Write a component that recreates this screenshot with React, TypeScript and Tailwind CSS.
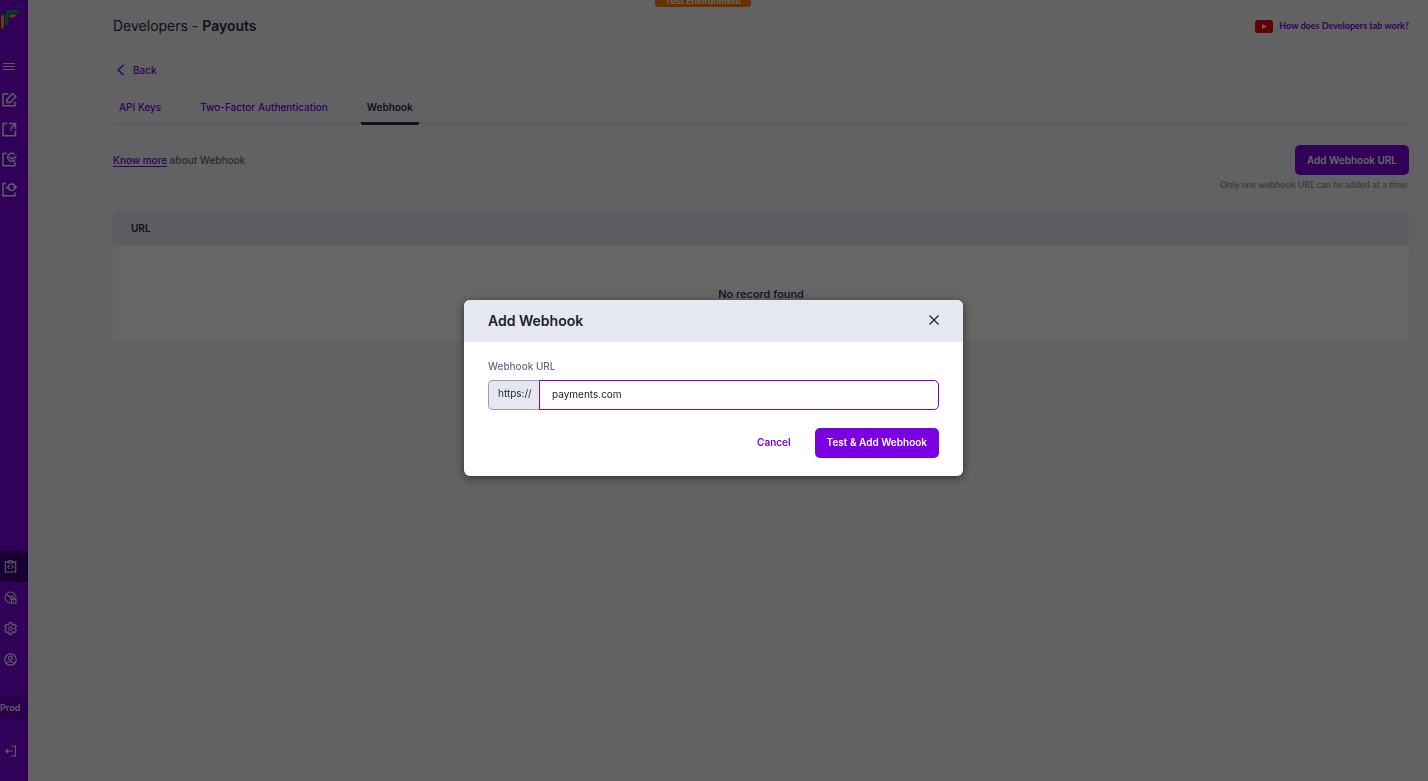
import { useState } from 'react'
import { clsx } from 'clsx'

interface NavItem {
  label: string
  icon: () => React.ReactElement
  active?: boolean
}

function Logo() {
  return (
    <svg width="21" height="20" viewBox="0 0 21 20" aria-hidden="true">
      <path d="M1 19V7.500Q1 4.500 4 4.500V15.500Q4 19 1 19Z" fill="#f59e0b" />
      <path d="M5 15V4Q5 0 9 0H20Q19 3.500 16 3.500H10Q8.500 3.500 8.500 5V11.500Q8.500 15 5 15Z" fill="#0a9a5b" />
      <path d="M9.500 4.500H16.500Q15.500 7.500 13 7.500H9.500Z" fill="#f59e0b" />
    </svg>
  )
}

function MenuIcon() {
  return (
    <svg width="12" height="8" viewBox="0 0 12 8" stroke="currentColor" aria-hidden="true">
      <path d="M0 .5H12M0 3.500H12M0 6.500H12" />
    </svg>
  )
}

function EditIcon() {
  return (
    <svg width="15" height="15" viewBox="0 0 15 15" fill="none" stroke="currentColor" strokeWidth="1.500" aria-hidden="true">
      <path d="M6.500 2H1V13.700H13V9.500" />
      <path d="M5 7.500L10.500 1.500L13.800 4.500L8.200 10.500H5Z" />
    </svg>
  )
}

function ExportIcon() {
  return (
    <svg width="15" height="15" viewBox="0 0 15 15" fill="none" stroke="currentColor" strokeWidth="1.500" aria-hidden="true">
      <path d="M5 1.500H1V13.700H13.500V8.500" />
      <path d="M7 1.500H13.500V7M13.500 1.500L10 5L8.500 8.500" />
    </svg>
  )
}

function CheckIcon() {
  return (
    <svg width="15" height="15" viewBox="0 0 15 15" fill="none" stroke="currentColor" strokeWidth="1.500" aria-hidden="true">
      <path d="M5 1.500H1V13.700H13V10" />
      <path d="M12.500 2.500A4 4 0 1 0 13 7.500M7.500 5L9.500 6.800L14.500 4.500" />
    </svg>
  )
}

function SyncIcon() {
  return (
    <svg width="15" height="15" viewBox="0 0 15 15" fill="none" stroke="currentColor" strokeWidth="1.500" aria-hidden="true">
      <path d="M4 1.500H1V13.700H13V10.500" />
      <path d="M6.200 4A3.800 3.800 0 0 1 13.300 5M13 6.500A3.800 3.800 0 0 1 6 6M4.200 6.500L6 4.800L7.800 6.500M11.500 4.500L13.200 6.200L14.800 4.500" />
    </svg>
  )
}

function CodeIcon() {
  return (
    <svg width="13" height="13" viewBox="0 0 12 12" fill="none" stroke="currentColor" aria-hidden="true">
      <path d="M4 1.700H1.200V11H10.800V1.700H8M4 2.700V1.300L6 .4L8 1.300V2.700Z" />
      <path d="M5 4.800L3.400 6.500L5 8.200M7 4.800L8.600 6.500L7 8.200" />
    </svg>
  )
}

function ActivityIcon() {
  return (
    <svg width="13" height="13" viewBox="0 0 13 13" fill="none" stroke="currentColor" strokeWidth="1.100" aria-hidden="true">
      <path d="M6.500 12A5.500 5.500 0 1 1 12 6.500" />
      <path d="M3 3.500L6.500 6.500L9.500 4M6.500 6.500V8.500M7.500 8.500H12V12.300H7.500ZM8.500 8.500V7.500A1.300 1.300 0 0 1 11 7.500V8.500M9.700 9.800V11" />
    </svg>
  )
}

function SettingsIcon() {
  return (
    <svg width="13" height="13" viewBox="0 0 12 12" fill="none" stroke="currentColor" strokeWidth="1.100" aria-hidden="true">
      <path d="M4.900 .6H7.100L7.500 2.300L8.400 2.800L10.200 2.300L11.300 4.200L10 5.500V6.500L11.300 7.800L10.200 9.700L8.400 9.200L7.500 9.700L7.100 11.400H4.900L4.500 9.700L3.600 9.200L1.800 9.700L.7 7.800L2 6.500V5.500L.7 4.200L1.800 2.300L3.600 2.800L4.500 2.300Z" />
      <circle cx="6" cy="6" r="1.600" />
    </svg>
  )
}

function ProfileIcon() {
  return (
    <svg width="13" height="13" viewBox="0 0 13 13" fill="none" stroke="currentColor" strokeWidth="1.200" aria-hidden="true">
      <circle cx="6.500" cy="6.500" r="5.700" />
      <circle cx="6.500" cy="5" r="1.900" />
      <path d="M2.500 10Q3.500 8.500 6.500 8.500T10.500 10" />
    </svg>
  )
}

function LogoutIcon() {
  return (
    <svg width="12" height="12" viewBox="0 0 12 12" fill="none" stroke="currentColor" strokeWidth="1.200" aria-hidden="true">
      <path d="M6 1H10.500V11H6M8 6H1M3 4L1 6L3 8" />
    </svg>
  )
}

const mainItems: NavItem[] = [
  { label: 'Create', icon: EditIcon },
  { label: 'Transfers', icon: ExportIcon },
  { label: 'Verification', icon: CheckIcon },
  { label: 'Recon', icon: SyncIcon }
]

const footerItems: NavItem[] = [
  { label: 'Developers', icon: CodeIcon, active: true },
  { label: 'Activity', icon: ActivityIcon },
  { label: 'Settings', icon: SettingsIcon },
  { label: 'Profile', icon: ProfileIcon }
]

const tabs = ['API Keys', 'Two-Factor Authentication', 'Webhook']

function Sidebar() {
  return (
    <aside className="w-7 shrink-0 flex flex-col bg-[#7a00df] text-[#f0e8f8]">
      <a href="#home" aria-label="Home" className="block h-[52px] pt-2.5">
        <Logo />
      </a>
      <button type="button" aria-label="Toggle menu" className="flex items-center h-8 pl-[3px] pb-0.5">
        <MenuIcon />
      </button>
      <nav className="flex flex-col">
        {mainItems.map(item => (
          <a
            href="#nav"
            key={item.label}
            aria-label={item.label}
            className="flex items-center h-[30px] pl-0.5"
          >
            <item.icon />
          </a>
        ))}
      </nav>
      <nav className="flex flex-col mt-auto">
        {footerItems.map(item => (
          <a
            href="#nav"
            key={item.label}
            aria-label={item.label}
            className={clsx(
              'flex items-center h-[31px] pl-1',
              item.active && 'bg-[#40007d]'
            )}
          >
            <item.icon />
          </a>
        ))}
      </nav>
      <button
        type="button"
        className="mt-5 h-[26px] rounded-r bg-[#6700bf] text-left text-[9px] font-semibold"
      >
        Prod
      </button>
      <button type="button" aria-label="Log out" className="flex items-center h-[60px] pl-[5px]">
        <LogoutIcon />
      </button>
    </aside>
  )
}

function WebhookModal({ onClose }: { onClose: () => void }) {
  const [url, setUrl] = useState('payments.com')

  return (
    <div className="fixed inset-0 flex items-center justify-center pb-1.5 pr-px bg-black/60">
      <div
        role="dialog"
        aria-modal="true"
        aria-labelledby="modal-title"
        className="w-full max-w-[499px] rounded-md bg-white overflow-hidden shadow-[0_2px_10px_rgba(0,0,0,0.5)]"
      >
        <div className="flex items-center justify-between h-[42px] px-6 bg-[#e6e8f1]">
          <h2 id="modal-title" className="text-sm font-semibold text-[#222226]">
            Add Webhook
          </h2>
          <button type="button" aria-label="Close" onClick={onClose} className="pb-0.5 text-[#22223a]">
            <svg width="10" height="10" viewBox="0 0 10 10" stroke="currentColor" strokeWidth="1.300" aria-hidden="true">
              <path d="M.5 .5L9.500 9.500M9.500 .5L.5 9.500" />
            </svg>
          </button>
        </div>
        <form className="px-6 pt-4 pb-[18px]" onSubmit={e => e.preventDefault()}>
          <label htmlFor="webhook-url" className="block mb-1.5 text-[10px] leading-4 font-medium text-[#6b6a80]">
            Webhook URL
          </label>
          <div className="flex h-[30px] text-[10px]">
            <span className="flex items-center w-[51px] pl-[9px] pb-0.5 rounded-l-[5px] border border-r-0 border-[#9c9bb0] bg-[#e6e8f1] text-[#2a2945]">
              https://
            </span>
            <input
              id="webhook-url"
              type="text"
              value={url}
              onChange={e => setUrl(e.target.value)}
              className="flex-1 min-w-0 px-3 rounded-r-[5px] border border-[#7a00df] text-[#222226] outline-none"
            />
          </div>
          <div className="flex justify-end gap-6 mt-[18px] h-[30px] text-[10px] font-semibold">
            <button type="button" onClick={onClose} className="text-[#7a00df]">
              Cancel
            </button>
            <button type="submit" className="px-3 rounded-[5px] bg-[#7a00df] text-white">
              Test &amp; Add Webhook
            </button>
          </div>
        </form>
      </div>
    </div>
  )
}

export default function App() {
  const [open, setOpen] = useState(true)

  return (
    <div className="flex min-h-screen bg-[#f5f5f9] text-[#2b2a45] font-[Inter,sans-serif]">
      <Sidebar />
      <div className="absolute inset-x-0 top-0 flex justify-center pr-[22px]">
        <span className="w-24 h-[7px] rounded-b-[3px] bg-[#ff7f00] text-[9px] leading-[1px] font-semibold text-center text-white overflow-hidden">
          Test Environment
        </span>
      </div>
      <main className="flex-1 min-w-0 pt-4 pl-[85px] pr-[19px]">
        <header className="flex items-center justify-between h-5">
          <h1 className="text-sm">
            Developers - <span className="font-semibold">Payouts</span>
          </h1>
          <a href="#help" className="flex items-center gap-1.5 font-[Lato,sans-serif] text-[9px] font-bold text-[#7a00df]">
            <svg width="18" height="13" viewBox="0 0 18 13" aria-hidden="true">
              <rect width="18" height="13" rx="3" fill="#f00000" />
              <path d="M7 4L12 6.500L7 9Z" fill="white" />
            </svg>
            How does Developers tab work?
          </a>
        </header>

        <a href="#back" className="flex items-center gap-2 h-5 mt-6 pl-1 w-fit text-[10px] font-medium text-[#7a00df]">
          <svg width="8" height="12" viewBox="0 0 8 12" fill="none" stroke="currentColor" strokeWidth="1.500" aria-hidden="true">
            <path d="M6.500 1L1 6L6.500 11" />
          </svg>
          Back
        </a>

        <nav className="flex gap-[27px] h-11 border-b border-[#d4d4dc] text-[10px] font-medium text-[#7a00df]">
          {tabs.map(tab => (
            <a
              href="#tab"
              key={tab}
              className={clsx(
                'flex items-center px-1.5 h-[45px] pt-3 border-b-[3px] rounded-b-xs',
                tab === 'Webhook' ? 'border-[#2b2a45] text-[#2b2a45] font-semibold' : 'border-transparent'
              )}
            >
              {tab}
            </a>
          ))}
        </nav>

        <div className="flex justify-between mt-[21px] text-[10px] font-medium">
          <p className="leading-[30px] text-[#6b6a80]">
            <a href="#docs" className="underline underline-offset-2 text-[#7a00df]">Know more</a> about Webhook
          </p>
          <div className="flex flex-col items-end">
            <button
              type="button"
              onClick={() => setOpen(true)}
              className="h-[30px] px-3 rounded-[5px] bg-[#7a00df] font-semibold text-white"
            >
              Add Webhook URL
            </button>
            <p className="mt-0.5 font-[Lato,sans-serif] text-[9px] leading-4 font-bold text-[#9c9bac]">
              Only one webhook URL can be added at a time.
            </p>
          </div>
        </div>

        <table className="w-full mt-[17px] border-separate border-spacing-0">
          <thead>
            <tr>
              <th className="h-9 px-[18px] rounded-md bg-[#e6e8f1] text-left text-[10px] font-semibold">URL</th>
            </tr>
          </thead>
          <tbody>
            <tr>
              <td className="h-24 rounded-md bg-white text-center text-[11px] font-medium">No record found</td>
            </tr>
          </tbody>
        </table>
      </main>
      {open && <WebhookModal onClose={() => setOpen(false)} />}
    </div>
  )
}
